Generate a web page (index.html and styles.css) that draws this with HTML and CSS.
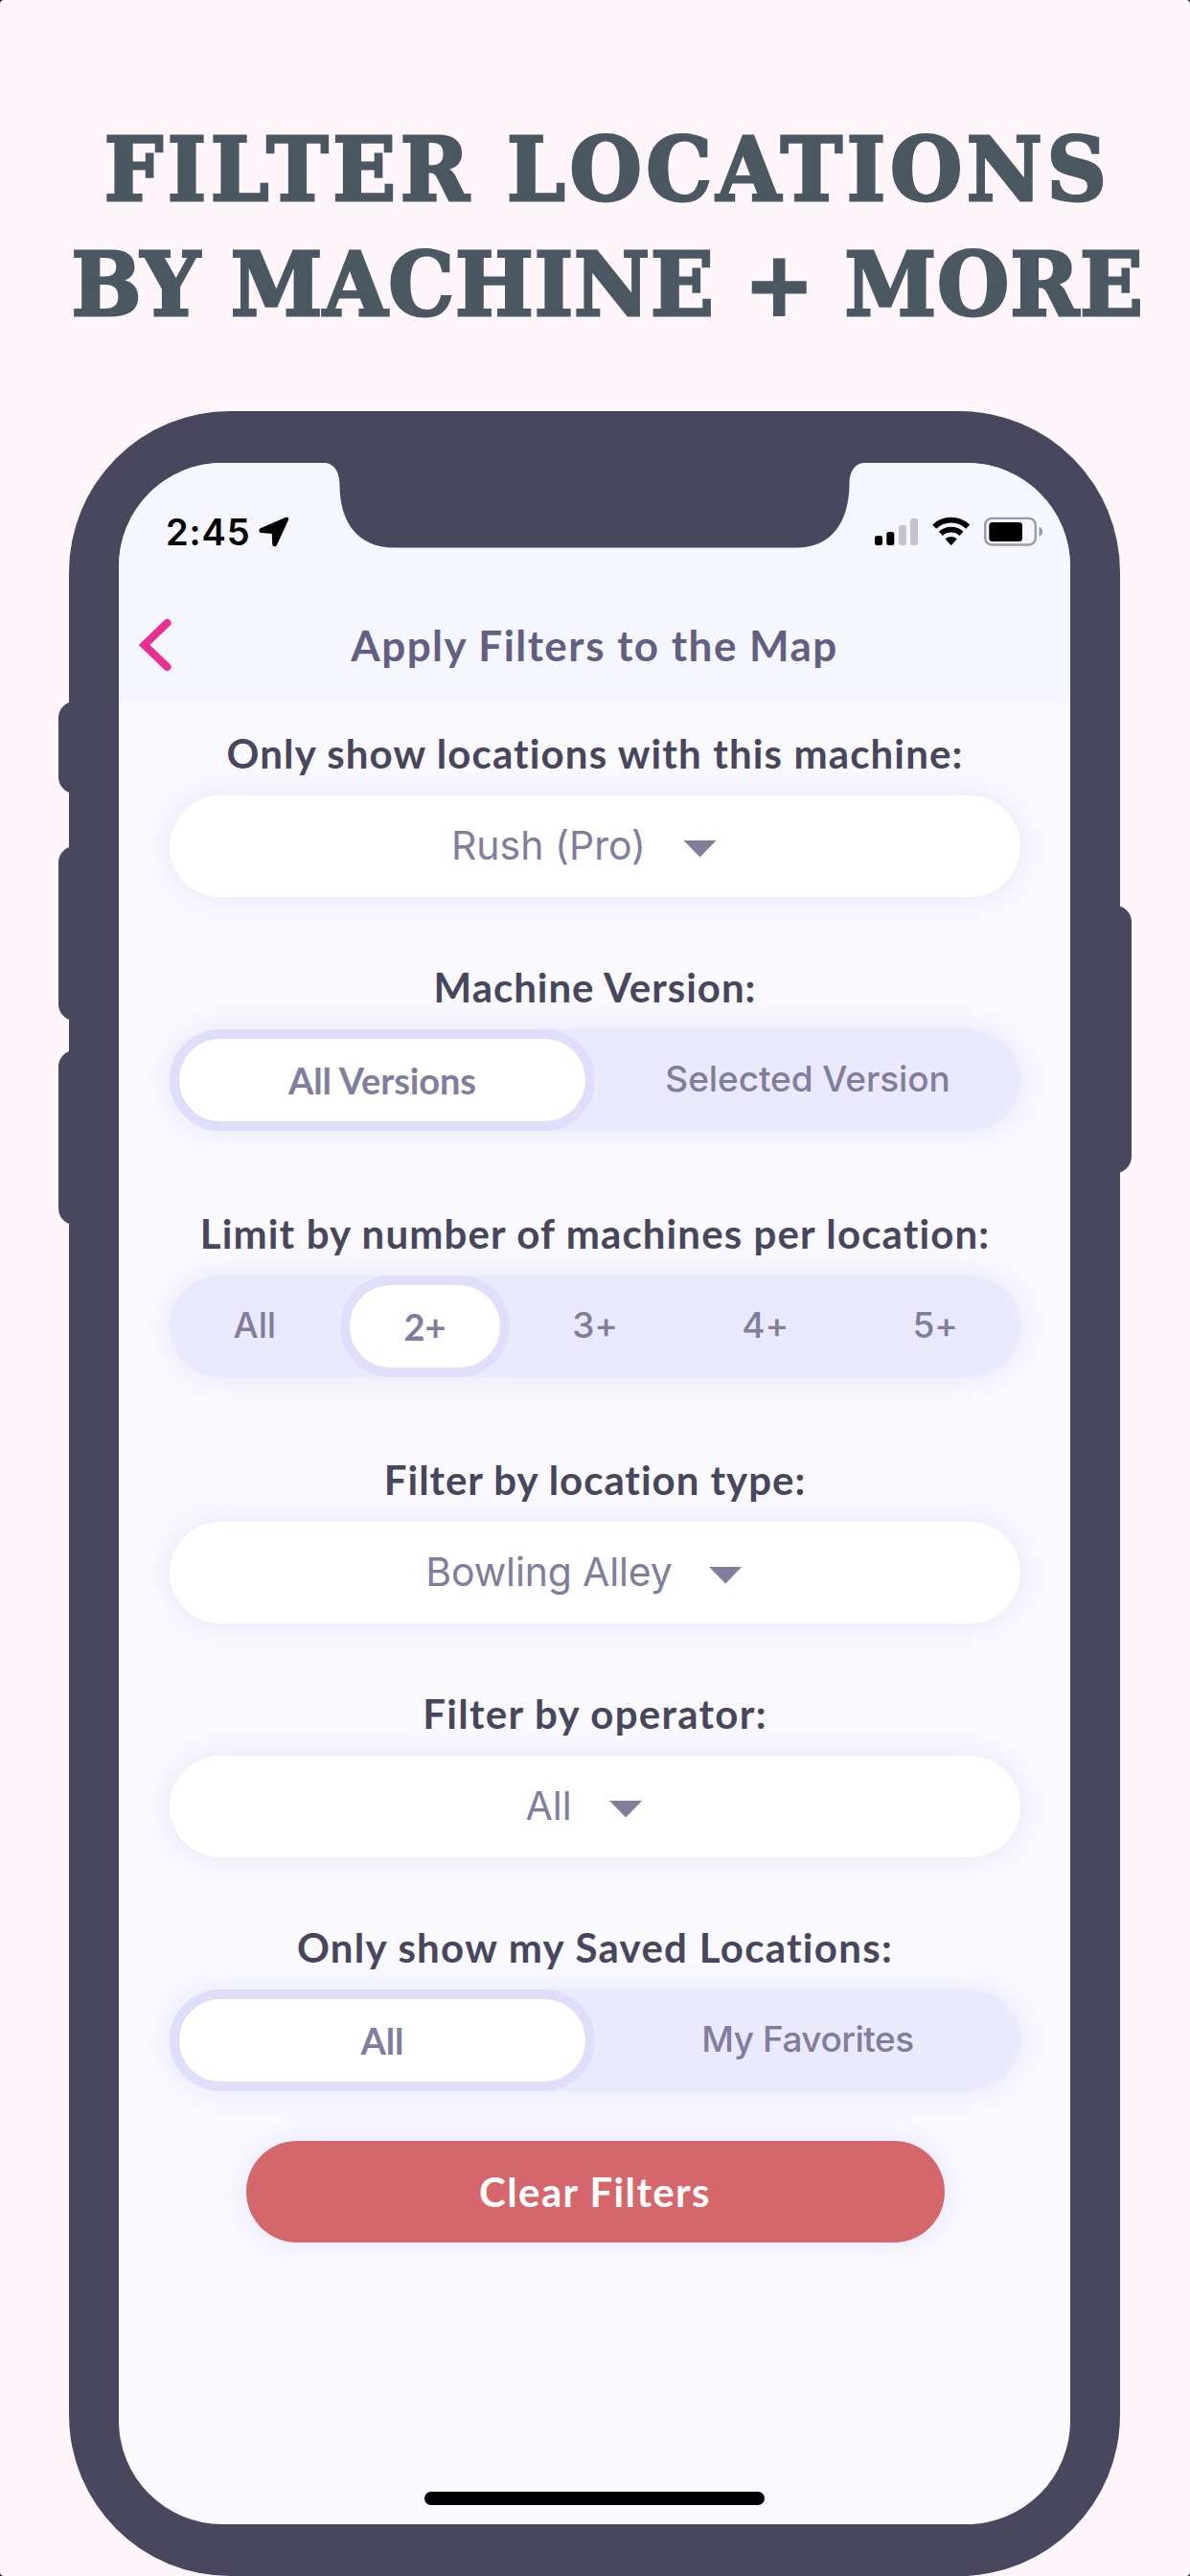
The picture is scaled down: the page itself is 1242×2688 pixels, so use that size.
FILE: index.html
```html
<!DOCTYPE html>
<html lang="en">
<head>
<meta charset="utf-8">
<title>Filter locations by machine + more</title>
<link rel="stylesheet" href="styles.css">
</head>
<body>
<main class="page">
  <h1 class="headline">
    <span class="headline-line headline-first">FILTER LOCATIONS</span>
    <span class="headline-line headline-second">BY MACHINE + MORE</span>
  </h1>

  <div class="phone">
    <i class="key key-mute"></i>
    <i class="key key-up"></i>
    <i class="key key-down"></i>
    <i class="key key-power"></i>

    <div class="screen">
      <svg class="notch" viewBox="0 0 564 90" aria-hidden="true">
        <path d="M0 0H564V1C554 1 548.500 11 548.500 22C548.500 60 532 89.500 493 89.500H74C33 89.500 16.500 60 16.500 24C16.500 11 11 1 0 1Z"/>
      </svg>

      <header class="top">
        <div class="status">
          <span class="time">2:45</span>
          <svg class="arrow" viewBox="0 0 32 32" aria-hidden="true">
            <path d="M29.200 2.700 17 29.200H16.300L15.600 16 2.500 15V14Z"/>
          </svg>
          <svg class="indicators" viewBox="0 0 180 34" aria-hidden="true">
            <rect x="3" y="21" width="8" height="10" rx="2.500"/>
            <rect x="15.300" y="17" width="8" height="14" rx="2.500"/>
            <rect class="dim" x="28" y="10" width="8" height="21" rx="2.500"/>
            <rect class="dim" x="40" y="3" width="8" height="28" rx="2.500"/>
            <path class="wave" d="M65.200 11.600A25.700 25.700 0 0 1 100.200 11.600M71.900 18.800A15.900 15.900 0 0 1 93.500 18.800"/>
            <path d="M76.600 24.300A9 9 0 0 1 88.800 24.300L83.400 30.500Q82.700 31.200 82 30.500Z"/>
            <rect class="case" x="118.200" y="2.900" width="52.600" height="27.600" rx="7"/>
            <rect x="122.300" y="7" width="34.700" height="20" rx="3.500"/>
            <path class="nub" d="M174.500 11.800Q178.200 13 178.200 16.700T174.500 21.600Z"/>
          </svg>
        </div>
        <div class="nav">
          <svg class="back" viewBox="0 0 34 56" aria-hidden="true">
            <path d="M29.500 5 5.500 28 29.500 51"/>
          </svg>
          <h2 class="title">Apply Filters to the Map</h2>
        </div>
      </header>

      <div class="form">
        <section class="field">
          <h3 class="label">Only show locations with this machine:</h3>
          <div class="select"><span>Rush (Pro)</span><i class="caret"></i></div>
        </section>

        <section class="field after-select">
          <h3 class="label label-snug">Machine Version:</h3>
          <div class="segments">
            <span class="segment selected">All Versions</span>
            <span class="segment">Selected Version</span>
          </div>
        </section>

        <section class="field after-segments">
          <h3 class="label">Limit by number of machines per location:</h3>
          <div class="segments">
            <span class="segment">All</span>
            <span class="segment selected">2+</span>
            <span class="segment">3+</span>
            <span class="segment">4+</span>
            <span class="segment">5+</span>
          </div>
        </section>

        <section class="field after-segments">
          <h3 class="label label-snug">Filter by location type:</h3>
          <div class="select select-tight"><span>Bowling Alley</span><i class="caret"></i></div>
        </section>

        <section class="field after-select">
          <h3 class="label label-wide">Filter by operator:</h3>
          <div class="select"><span>All</span><i class="caret"></i></div>
        </section>

        <section class="field after-select">
          <h3 class="label label-wide">Only show my Saved Locations:</h3>
          <div class="segments">
            <span class="segment selected">All</span>
            <span class="segment favorites">My Favorites</span>
          </div>
        </section>

        <div class="clear">Clear Filters</div>
      </div>

      <div class="home"></div>
    </div>
  </div>
</main>
</body>
</html>
```
FILE: styles.css
```css
* { box-sizing: border-box; }

html { background: #000; }

body { margin: 0; }

h1, h2, h3 { margin: 0; font-weight: 700; }

.page {
  width: 1242px;
  height: 2688px;
  padding-top: 117px;
  overflow: hidden;
  border-radius: 4px;
  background: #fff6fc;
}

/* Headline */
.headline {
  display: flex;
  flex-direction: column;
  align-items: center;
  height: 312px;
  color: #4b5861;
  font: 700 91px/120px "DejaVu Serif", serif;
  white-space: nowrap;
  -webkit-text-stroke: 3px #4b5861;
}

.headline-line {
  margin-left: 27px;
  transform: scaleX(.95);
}

.headline-first { letter-spacing: 4.9px; }
.headline-second { letter-spacing: 1px; }

/* Phone */
.phone {
  position: relative;
  width: 1097px;
  height: 2259px;
  margin-left: 72px;
  padding: 54px 52px;
  border-radius: 168px;
  background: #48475e;
}

.key {
  position: absolute;
  width: 40px;
  border-radius: 17px;
  background: #48475e;
}

.key-mute { left: -10.8px; top: 303px; height: 96px; }
.key-up { left: -10.8px; top: 454px; height: 182px; }
.key-down { left: -10.8px; top: 667px; height: 182px; }
.key-power { right: -11.5px; top: 516px; height: 279px; }

.screen {
  position: relative;
  display: flex;
  flex-direction: column;
  width: 993px;
  height: 2151px;
  overflow: hidden;
  border-radius: 108px;
  background: #faf9fe;
}

.notch {
  position: absolute;
  left: 214px;
  top: -1px;
  width: 564px;
  height: 90px;
  fill: #48475e;
}

/* Status bar and title */
.top {
  height: 249px;
  background: #f5f6fe;
}

.status {
  display: flex;
  align-items: center;
  height: 144px;
  padding: 0 27px 0 49px;
}

.time {
  font: 600 38px/46px Inter, sans-serif;
  letter-spacing: .9px;
}

.arrow {
  width: 32px;
  height: 32px;
  margin-left: 8px;
  stroke: #000;
  stroke-width: 4;
  stroke-linejoin: round;
}

.indicators {
  width: 180px;
  height: 34px;
  margin-left: auto;
}

.dim { fill: #c4c4ca; }

.wave {
  fill: none;
  stroke: #000;
  stroke-width: 5.8;
}

.case {
  fill: none;
  stroke: #9b9ba2;
  stroke-width: 2.4;
}

.nub { fill: #9b9ba2; }

.nav {
  display: grid;
  grid-template-columns: 34px 1fr 34px;
  align-items: center;
  height: 92px;
  padding: 0 21px;
}

.back {
  width: 34px;
  height: 56px;
  fill: none;
  stroke: #e82f93;
  stroke-width: 8;
  stroke-linecap: round;
}

.title {
  color: #635f82;
  font: 700 44px/54px Lato, sans-serif;
  letter-spacing: 1.48px;
  text-align: center;
}

/* Filters */
.form {
  display: flex;
  flex-direction: column;
  padding: 28px 52px 0 53px;
}

.after-select { margin-top: 68px; }
.after-segments { margin-top: 81px; }

.label {
  margin-bottom: 18px;
  color: #47465c;
  font: 700 42px/52px Lato, sans-serif;
  letter-spacing: 1.12px;
  text-align: center;
  white-space: nowrap;
}

.label-snug { letter-spacing: .96px; }
.label-wide { letter-spacing: 1.28px; }

.select,
.segments,
.clear {
  height: 106px;
  border-radius: 53px;
  box-shadow: 0 0 28px rgba(165, 170, 245, .24);
}

.select,
.clear {
  display: flex;
  align-items: center;
  justify-content: center;
}

.select {
  gap: 39px;
  padding: 0 23px 2px 0;
  background: #fff;
  color: #817d9d;
  font: 400 41px/50px Inter, sans-serif;
}

.select-tight {
  gap: 38px;
  letter-spacing: -.15px;
}

.caret {
  width: 35px;
  height: 18px;
  margin-top: 7px;
  background: #817d9d;
  clip-path: polygon(0 0, 100% 0, 50% 100%);
}

.segments {
  display: grid;
  grid-auto-columns: minmax(0, 1fr);
  grid-auto-flow: column;
  background: #ebeafc;
}

.segment {
  display: flex;
  align-items: center;
  justify-content: center;
  padding-bottom: 3px;
  border-radius: 53px;
  color: #817d9d;
  font: 500 37px/46px Inter, sans-serif;
  letter-spacing: -.1px;
  white-space: nowrap;
}

.favorites { letter-spacing: -.5px; }

.selected {
  padding-bottom: 1px;
  border: 10.500px solid #e0defb;
  background: #fff;
  font: 700 38px/46px Lato, sans-serif;
}

.clear {
  align-self: center;
  width: 729px;
  margin-top: 52px;
  padding-bottom: 1px;
  background: #d5666c;
  color: #fff;
  font: 700 42px/52px Lato, sans-serif;
  letter-spacing: 1.4px;
}

.home {
  width: 355px;
  height: 14px;
  margin: auto auto 20px;
  border-radius: 7px;
  background: #000;
}
```
